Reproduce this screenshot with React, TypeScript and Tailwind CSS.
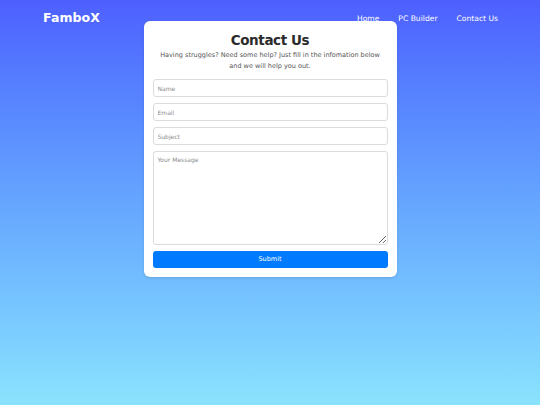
import React from "react";

const font = { fontFamily: '"DejaVu Sans", "Noto Sans", sans-serif' };

export default function App() {
	return (
		<div
			className="relative min-h-[405px] w-full bg-linear-to-b from-[#4e5fff] to-[#8ae3fd]"
			style={font}
		>
			<header className="absolute inset-x-0 top-0 z-10 flex h-[37px] items-center justify-between pl-[43px] pr-[42px] text-white">
				<span className="text-[12.5px] font-bold tracking-[0.1px]">FamboX</span>
				<nav className="flex items-center gap-[19px] text-[7.6px]">
					<a href="#">Home</a>
					<a href="#">PC Builder</a>
					<a href="#">Contact Us</a>
				</nav>
			</header>

			<main className="pt-[21px]">
				<div className="mx-auto flex w-[253px] flex-col rounded-[6px] bg-white px-[9px] pb-[9px] pt-[9px] shadow-sm">
					<h1 className="text-center text-[13.5px] font-bold leading-[20px] tracking-[-0.4px] text-[#2b2b2b]">
						Contact Us
					</h1>
					<p className="mx-auto w-[228px] text-center text-[6.5px] leading-[11px] text-[#555]">
						Having struggles? Need some help? Just fill in the infomation below and we
						will help you out.
					</p>

					<form className="mt-[7px] flex flex-col gap-[6px]">
						<Field placeholder="Name" />
						<Field placeholder="Email" />
						<Field placeholder="Subject" />
						<textarea
							placeholder="Your Message"
							className="block h-[94px] w-full rounded-[3px] border border-[#dcdcdc] px-[4px] py-[3px] text-[6px] leading-[9px] outline-none placeholder:text-[#8a8a8a]"
						/>
						<button
							type="button"
							className="h-[17px] w-full rounded-[3px] bg-[#007bff] text-[6.5px] text-white"
						>
							Submit
						</button>
					</form>
				</div>
			</main>
		</div>
	);
}

function Field({ placeholder }: { placeholder: string }) {
	return (
		<input
			type="text"
			placeholder={placeholder}
			className="block h-[18px] w-full rounded-[3px] border border-[#dcdcdc] px-[4px] text-[6px] outline-none placeholder:text-[#8a8a8a]"
		/>
	);
}
